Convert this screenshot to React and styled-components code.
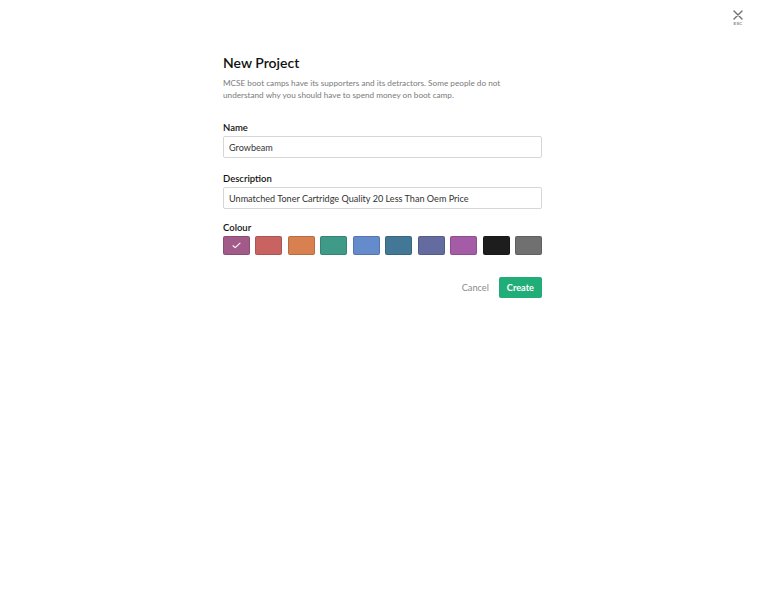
import { useState } from 'react'
import styled, { createGlobalStyle } from 'styled-components'

const GlobalStyle = createGlobalStyle`
  html, body {
    margin: 0;
    padding: 0;
    background: #ffffff;
    font-family: Lato, "Open Sans", sans-serif;
    -webkit-font-smoothing: antialiased;
  }
`

const COLOURS = [
  '#a25b89',
  '#c96361',
  '#d8804f',
  '#3f9a87',
  '#648bcb',
  '#427895',
  '#636b9f',
  '#a55ca7',
  '#1d1d1d',
  '#707070',
]

const Page = styled.div`
  position: relative;
  width: 765px;
  height: 600px;
  display: flex;
  justify-content: center;
`
const Close = styled.button`
  position: absolute;
  top: 10px;
  right: 22px;
  display: flex;
  flex-direction: column;
  align-items: center;
  gap: 1px;
  padding: 0;
  border: none;
  background: none;
  cursor: pointer;
  color: #777;
`
const EscLabel = styled.span`
  font-size: 4px;
  font-weight: 700;
  letter-spacing: 0.3px;
  color: #888;
`
const Form = styled.form`
  width: 319px;
  padding-top: 54px;
  display: flex;
  flex-direction: column;
`
const Title = styled.h1`
  margin: 0;
  font-size: 14px;
  font-weight: 600;
  line-height: 18px;
  color: #111;
`
const Intro = styled.p`
  margin: 5px 0 0;
  max-width: 290px;
  font-size: 8.2px;
  line-height: 12px;
  color: #7a7a7a;
`
const Field = styled.div`
  display: flex;
  flex-direction: column;
  margin-top: ${props => props.gap}px;
`
const Label = styled.label`
  font-size: 9.5px;
  font-weight: 600;
  line-height: 13px;
  color: #111;
  margin-bottom: 2px;
`
const Input = styled.input`
  box-sizing: border-box;
  width: 100%;
  height: 22px;
  padding: 0 5px;
  border: 1px solid #d6d6d6;
  border-radius: 2px;
  font-family: inherit;
  font-size: 9.1px;
  color: #333;
  outline: none;
`
const Swatches = styled.div`
  display: flex;
  justify-content: space-between;
`
const Swatch = styled.button`
  box-sizing: border-box;
  width: 27px;
  height: 19px;
  padding: 0;
  border: 1px solid rgba(0, 0, 0, 0.15);
  border-radius: 2px;
  background-color: ${props => props.colour};
  display: flex;
  align-items: center;
  justify-content: center;
  cursor: pointer;
`
const Actions = styled.div`
  display: flex;
  justify-content: flex-end;
  align-items: center;
  gap: 10px;
  margin-top: 22px;
`
const CancelButton = styled.button`
  border: none;
  background: none;
  padding: 0;
  font-family: inherit;
  font-size: 9.2px;
  color: #8a8a8a;
  cursor: pointer;
`
const CreateButton = styled.button`
  height: 21px;
  padding: 0 8px;
  border: none;
  border-radius: 2px;
  background-color: #21ad78;
  font-family: inherit;
  font-size: 9.2px;
  font-weight: 700;
  color: #fff;
  cursor: pointer;
`

function Check() {
  return (
    <svg width="9" height="7" viewBox="0 0 9 7" fill="none">
      <path d="M1 3.8 L3.2 5.6 L8 1.2" stroke="#fff" strokeWidth="1.1" strokeLinecap="round" strokeLinejoin="round" />
    </svg>
  )
}

function App() {
  const [selected, setSelected] = useState(0)

  return (
    <Page>
      <GlobalStyle />
      <Close type="button">
        <svg width="10" height="10" viewBox="0 0 10 10">
          <path d="M1 1 L9 9 M9 1 L1 9" stroke="#6f6f6f" strokeWidth="1.4" strokeLinecap="round" />
        </svg>
        <EscLabel>ESC</EscLabel>
      </Close>
      <Form onSubmit={e => e.preventDefault()}>
        <Title>New Project</Title>
        <Intro>
          MCSE boot camps have its supporters and its detractors. Some people do not
          understand why you should have to spend money on boot camp.
        </Intro>
        <Field gap={20}>
          <Label>Name</Label>
          <Input defaultValue="Growbeam" />
        </Field>
        <Field gap={14}>
          <Label>Description</Label>
          <Input defaultValue="Unmatched Toner Cartridge Quality 20 Less Than Oem Price" />
        </Field>
        <Field gap={12}>
          <Label>Colour</Label>
          <Swatches>
            {COLOURS.map((colour, index) => (
              <Swatch
                key={colour}
                type="button"
                colour={colour}
                onClick={() => setSelected(index)}
              >
                {selected === index && <Check />}
              </Swatch>
            ))}
          </Swatches>
        </Field>
        <Actions>
          <CancelButton type="button">Cancel</CancelButton>
          <CreateButton type="submit">Create</CreateButton>
        </Actions>
      </Form>
    </Page>
  )
}

export default App
